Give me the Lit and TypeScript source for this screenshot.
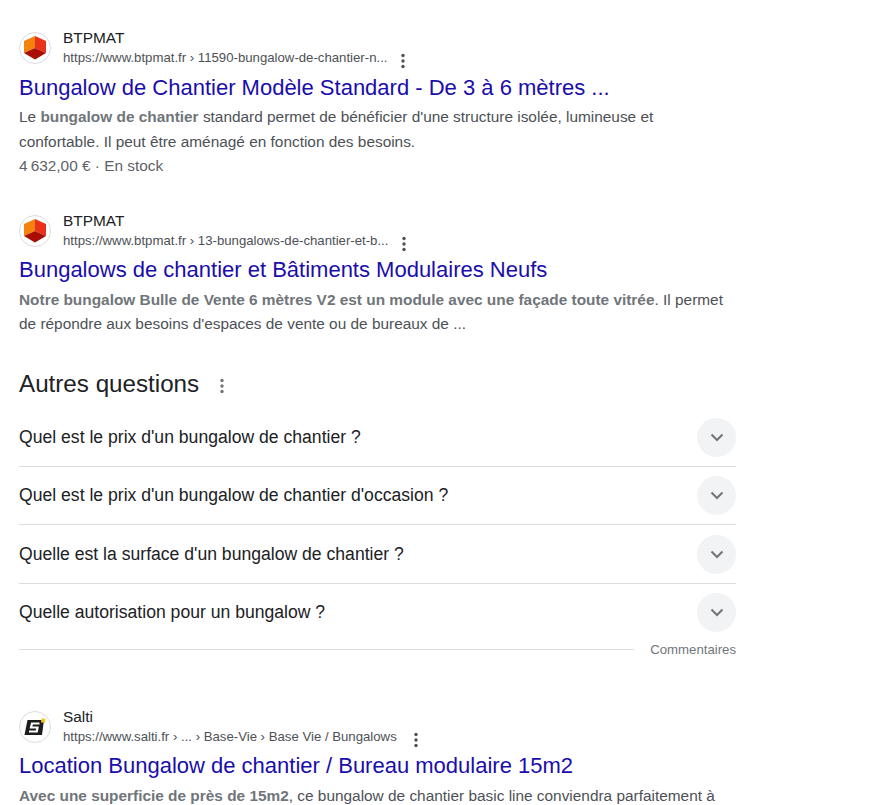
import { LitElement, html, css } from "lit";
import { customElement } from "lit/decorators.js";

const dots = html`<svg class="dots" viewBox="0 0 4 16" width="4" height="16"><circle cx="2" cy="2.5" r="1.7"/><circle cx="2" cy="8" r="1.7"/><circle cx="2" cy="13.5" r="1.7"/></svg>`;

const btp = html`<span class="fav"><svg viewBox="0 0 30 30" width="30" height="30">
  <polygon points="15,3 26,8 26,20 15,15" fill="#e8321a"/>
  <polygon points="4,8 15,3 15,15 4,20" fill="#f5820f"/>
  <polygon points="4,20 15,15 26,20 15,26.5" fill="#a80d06"/>
</svg></span>`;

const salti = html`<span class="fav"><svg viewBox="0 0 30 30" width="30" height="30">
  <polygon points="7.5,8 24,8 22,23 4.5,23" fill="#1c1c1c"/>
  <polygon points="21.5,6.5 25.5,6.5 25,10.5 21,10.5" fill="#f2c61f"/>
  <path d="M19.5 11.5 H12 L11 15.5 H17.5 L16.8 19.5 H9" fill="none" stroke="#fff" stroke-width="2.2"/>
</svg></span>`;

interface Result {
  icon: unknown;
  site: string;
  url: string;
  title: string;
  body: unknown;
  cls?: string;
}

const questions = [
  "Quel est le prix d'un bungalow de chantier ?",
  "Quel est le prix d'un bungalow de chantier d'occasion ?",
  "Quelle est la surface d'un bungalow de chantier ?",
  "Quelle autorisation pour un bungalow ?",
];

@customElement("app-root")
export class AppRoot extends LitElement {
  static styles = css`
    :host {
      display: block;
      width: 882px;
      height: 805px;
      overflow: hidden;
      background: #fff;
      font-family: "Liberation Sans", Arial, sans-serif;
      color: #202124;
    }
    .page {
      display: flex;
      flex-direction: column;
      width: 717px;
      padding: 28px 0 0 19px;
    }
    .result { display: flex; flex-direction: column; }
    .head { display: flex; align-items: center; height: 40px; gap: 12px; }
    .fav {
      flex: none;
      width: 30px;
      height: 30px;
      border: 1px solid #dadce0;
      border-radius: 50%;
      background: #fff;
      overflow: hidden;
      display: flex;
    }
    .meta { display: flex; flex-direction: column; min-width: 0; }
    .site { font-size: 15.4px; line-height: 20px; color: #202124; }
    .urlrow { display: flex; align-items: center; height: 20px; }
    .url { font-size: 13.2px; line-height: 18px; color: #4d5156; white-space: nowrap; }
    .dots { fill: #4d5156; flex: none; }
    .urlrow .dots { margin: 6px 0 0 14px; }
    .wide .urlrow .dots { margin-left: 17px; }
    .title {
      font-size: 22px;
      line-height: 26px;
      color: #1a0dab;
      margin-top: 7px;
      white-space: nowrap;
    }
    .snippet {
      font-size: 15.4px;
      line-height: 24.5px;
      color: #4d5156;
      margin-top: 4px;
    }
    .snippet b { color: #70757a; font-weight: 700; }
    .price { color: #5f6368; }
    .gap1 { margin-bottom: 32px; }
    .gap2 { margin-bottom: 33.5px; }
    .gap2 .title { margin-top: 6.5px; }
    .gap2 .snippet { margin-top: 4.5px; }
    .wide .title { margin-top: 6px; }
    .wide .snippet { margin-top: 5px; }
    .paa-title { display: flex; align-items: center; gap: 21px; height: 28px; font-size: 24.2px; color: #202124; }
    .paa-title .dots { margin-top: 4px; fill: #70757a; }
    .rows { display: flex; flex-direction: column; margin-top: 10.4px; }
    .row {
      display: flex;
      align-items: center;
      justify-content: space-between;
      height: 57.5px;
      border-bottom: 1px solid #dadce0;
      font-size: 17.6px;
      color: #202124;
    }
    .row:last-child { border-bottom: none; }
    .chev {
      width: 39px;
      height: 39px;
      border-radius: 50%;
      background: #f1f3f4;
      display: flex;
      align-items: center;
      justify-content: center;
    }
    .feedback { display: flex; align-items: center; gap: 16px; height: 16px; margin-top: 0; margin-bottom: 50px; }
    .rule { flex: 1; height: 1px; background: #dadce0; }
    .fb-text { font-size: 13.2px; color: #70757a; }
  `;

  private results: Result[] = [
    {
      icon: btp,
      site: "BTPMAT",
      url: "https://www.btpmat.fr › 11590-bungalow-de-chantier-n...",
      title: "Bungalow de Chantier Modèle Standard - De 3 à 6 mètres ...",
      body: html`Le <b>bungalow de chantier</b> standard permet de bénéficier d'une structure isolée, lumineuse et<br />confortable. Il peut être aménagé en fonction des besoins.<br /><span class="price">4\u202F632,00 € · En stock</span>`,
      cls: "gap1",
    },
    {
      icon: btp,
      site: "BTPMAT",
      url: "https://www.btpmat.fr › 13-bungalows-de-chantier-et-b...",
      title: "Bungalows de chantier et Bâtiments Modulaires Neufs",
      body: html`<b>Notre bungalow Bulle de Vente 6 mètres V2 est un module avec une façade toute vitrée</b>. Il permet<br />de répondre aux besoins d'espaces de vente ou de bureaux de ...`,
      cls: "gap2",
    },
  ];

  private renderResult(r: Result) {
    return html`<div class="result ${r.cls ?? ""}">
      <div class="head">
        ${r.icon}
        <div class="meta">
          <div class="site">${r.site}</div>
          <div class="urlrow"><span class="url">${r.url}</span>${dots}</div>
        </div>
      </div>
      <div class="title">${r.title}</div>
      <div class="snippet">${r.body}</div>
    </div>`;
  }

  render() {
    return html`<div class="page">
      ${this.results.map((r) => this.renderResult(r))}
      <div class="paa-title">Autres questions ${dots}</div>
      <div class="rows">
        ${questions.map(
          (q) => html`<div class="row">
            <span>${q}</span>
            <span class="chev"><svg width="14" height="9" viewBox="0 0 14 9"><path d="M1.5 1.5 L7 7 L12.5 1.5" fill="none" stroke="#70757a" stroke-width="2"/></svg></span>
          </div>`
        )}
      </div>
      <div class="feedback"><span class="rule"></span><span class="fb-text">Commentaires</span></div>
      ${this.renderResult({
        icon: salti,
        site: "Salti",
        url: "https://www.salti.fr › ... › Base-Vie › Base Vie / Bungalows",
        title: "Location Bungalow de chantier / Bureau modulaire 15m2",
        body: html`<b>Avec une superficie de près de 15m2</b>, ce bungalow de chantier basic line conviendra parfaitement à`,
        cls: "wide",
      })}
    </div>`;
  }
}
